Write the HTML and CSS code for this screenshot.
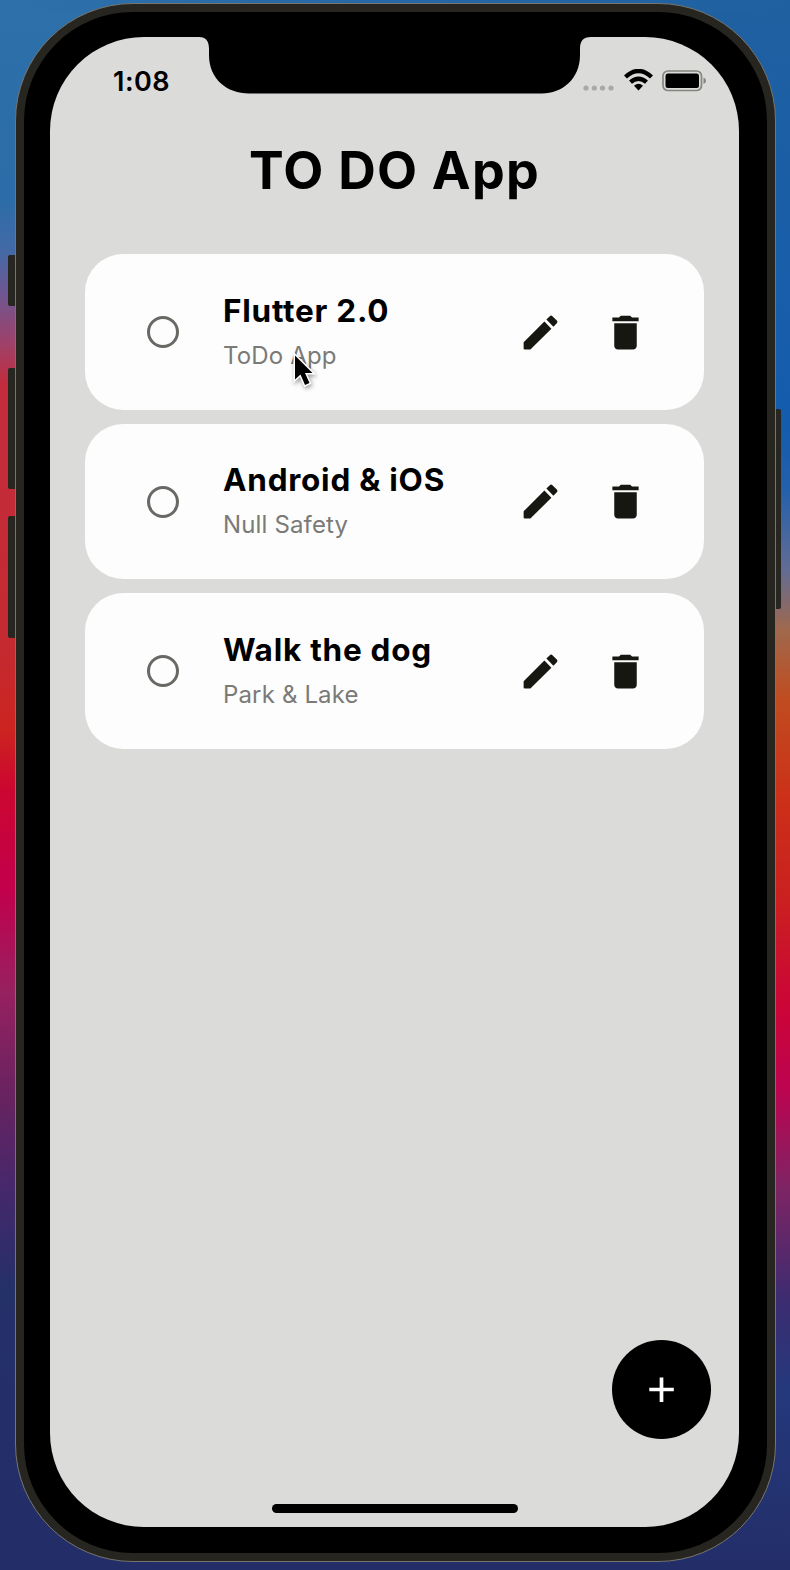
FILE: index.html
```html
<!DOCTYPE html>
<html lang="en">
<head>
<meta charset="utf-8">
<title>TO DO App</title>
<link rel="stylesheet" href="styles.css">
</head>
<body>
<svg class="defs" width="0" height="0" aria-hidden="true">
  <symbol id="edit" viewBox="0 0 24 24"><path d="M3 17.46v3.04c0 .28.22.5.5.5h3.04c.13 0 .26-.05.35-.15L17.81 9.94l-3.75-3.75L3.15 17.1c-.1.1-.15.22-.15.36zM20.71 7.04c.39-.39.39-1.02 0-1.41l-2.34-2.34c-.39-.39-1.02-.39-1.41 0l-1.83 1.83 3.75 3.75 1.83-1.83z"/></symbol>
  <symbol id="trash" viewBox="0 0 24 24"><path d="M6 19c0 1.1.9 2 2 2h8c1.1 0 2-.9 2-2V7H6v12zM19 4h-3.500l-1-1h-5l-1 1H5v2h14V4z"/></symbol>
</svg>
<div class="side-button mute"></div>
<div class="side-button volume-up"></div>
<div class="side-button volume-down"></div>
<div class="side-button power"></div>
<div class="phone">
  <div class="bezel">
    <main class="screen">
      <svg class="notch" viewBox="0 0 392 57" width="392" height="57"><path d="M0 0C7 0 10 4 10 12V18C10 42 28 56.500 50 56.500H343C363 56.500 381 42 381 18V12C381 4 384 0 392 0Z"/></svg>
      <header class="status">
        <span class="time">1:08</span>
        <span class="indicators">
          <svg class="signal" width="32" height="28" viewBox="0 0 32 28"><circle cx="3" cy="21" r="2.600"/><circle cx="11.300" cy="21" r="2.600"/><circle cx="19.500" cy="21" r="2.600"/><circle cx="28" cy="21" r="2.600"/></svg>
          <svg class="wifi" width="29" height="22" viewBox="0 0 29 22"><path class="arc" d="M1.500 8Q14.500-4 27.500 8"/><path class="arc" d="M6.500 13.200Q14.500 6.200 22.500 13.200"/><path d="M10 16.700Q14.500 12.600 19 16.700L14.500 21.500Z"/></svg>
          <svg class="battery" width="45" height="22" viewBox="0 0 45 22"><rect class="case" x="1" y="1" width="38.500" height="19.500" rx="5"/><rect x="3.500" y="3.500" width="33.500" height="14.500" rx="2.500"/><path class="cap" d="M41.500 7.500Q44 8.500 44 10.800T41.500 14Z"/></svg>
        </span>
      </header>
      <h1 class="title">TO DO App</h1>
      <ul class="list">
        <li class="card">
          <span class="check"></span>
          <div class="text"><h2 class="name">Flutter 2.0</h2><p class="note">ToDo App</p></div>
          <svg class="icon"><use href="#edit"/></svg>
          <svg class="icon"><use href="#trash"/></svg>
        </li>
        <li class="card">
          <span class="check"></span>
          <div class="text"><h2 class="name">Android &amp; iOS</h2><p class="note">Null Safety</p></div>
          <svg class="icon"><use href="#edit"/></svg>
          <svg class="icon"><use href="#trash"/></svg>
        </li>
        <li class="card">
          <span class="check"></span>
          <div class="text"><h2 class="name">Walk the dog</h2><p class="note">Park &amp; Lake</p></div>
          <svg class="icon"><use href="#edit"/></svg>
          <svg class="icon"><use href="#trash"/></svg>
        </li>
      </ul>
      <footer class="footer">
        <button class="add" aria-label="Add"><svg width="26" height="26" viewBox="0 0 26 26"><path d="M12.500 .5V25M.3 12.500H24.800"/></svg></button>
        <div class="home-bar"></div>
      </footer>
    </main>
  </div>
</div>
<svg class="cursor" width="30" height="40" viewBox="0 0 30 40"><path d="M3 3.500V27.500L8.500 22.500L13 33L17.500 31L13 21H20.500Z"/></svg>
</body>
</html>
```
FILE: styles.css
```css
* { box-sizing: border-box; }
body {
  margin: 0;
  width: 790px;
  height: 1570px;
  overflow: hidden;
  padding: 3px 14px 8px 15px;
  font-family: Inter, "Liberation Sans", sans-serif;
  background:
    linear-gradient(90deg, #2d70aa, #1f60a0) top / 100% 12px no-repeat,
    linear-gradient(#2d70aa 0, #2c6ca8 200px, #426aa5 250px, #6b5894 290px, #a04068 345px, #c22c3c 385px, #c42a30 650px, #cc2420 730px, #cc0630 790px, #c2004c 890px, #982060 990px, #662360 1100px, #45286c 1190px, #243068 1290px, #232e68 1570px) left / 150px 100% no-repeat,
    linear-gradient(#1f60a0 0, #145cae 430px, #2460ac 490px, #626c94 570px, #a0684c 630px, #c04c20 700px, #cc3018 800px, #ca2020 900px, #cb0438 1010px, #bc0450 1090px, #7c2464 1190px, #3c2c70 1300px, #24387c 1390px, #232e68 1570px) right / 640px 100% no-repeat;
}
.defs { position: absolute; }
.side-button { position: absolute; left: 8px; width: 9px; background: #282620; border-radius: 2px 0 0 2px; }
.mute { top: 255px; height: 51px; }
.volume-up { top: 368px; height: 121px; }
.volume-down { top: 516px; height: 122px; }
.power { left: 773px; top: 409px; height: 200px; width: 8px; border-radius: 0 2px 2px 0; }
.phone {
  position: relative;
  height: 1559px;
  padding: 8px;
  border: 1px solid #77756e;
  border-radius: 118px;
  background: #26251f;
}
.bezel { height: 100%; padding: 25px 28px 26px 26px; border-radius: 109px; background: #000; }
.screen {
  position: relative;
  height: 100%;
  display: flex;
  flex-direction: column;
  overflow: hidden;
  border-radius: 94px;
  background: #dbdbd9;
}
.notch { position: absolute; top: 0; left: 149px; }
.status { height: 90px; display: flex; justify-content: space-between; padding: 29px 32px 0 63px; }
.time { font-size: 27px; line-height: 32px; font-weight: 600; letter-spacing: .5px; }
.indicators { display: flex; gap: 9px; padding-top: 4px; }
.signal { fill: #a9a9a9; margin-top: -3px; }
.wifi { margin-top: -1px; }
.arc { fill: none; stroke: #000; stroke-width: 4.400; }
.case { fill: none; stroke: #85857f; stroke-width: 1.700; }
.cap { fill: #85857f; }
.title { margin: 12px 0 0; height: 64px; line-height: 64px; text-align: center; font-size: 52px; font-weight: 700; letter-spacing: 1.250px; }
.list { margin: 51px 0 0; padding: 0 35px; list-style: none; display: grid; gap: 14px; }
.card { height: 155.500px; padding: 1px 0 0 62px; border-radius: 38px; background: #fdfdfd; display: flex; align-items: center; }
.check { width: 32px; height: 32px; border: 3px solid #686864; border-radius: 50%; margin-right: 44px; flex: none; }
.text { width: 295px; padding-top: 2px; flex: none; }
.name { margin: 0; font-size: 31.500px; line-height: 42px; font-weight: 700; letter-spacing: .75px; }
.note { margin: 3px 0 0; font-size: 24px; line-height: 42px; color: #7a7a77; letter-spacing: .15px; }
.icon { width: 45px; height: 45px; fill: #171711; flex: none; }
.icon + .icon { margin-left: 40px; }
.footer { margin-top: auto; display: flex; flex-direction: column; }
.add { align-self: flex-end; margin: 0 28px 65px 0; width: 99px; height: 99px; border: 0; padding: 0; border-radius: 50%; background: #000; display: grid; place-items: center; }
.add path { fill: none; stroke: #fff; stroke-width: 3.700; }
.home-bar { align-self: center; width: 246px; height: 9px; margin-bottom: 14px; border-radius: 5px; background: #000; }
.cursor { position: absolute; left: 292px; top: 352px; filter: drop-shadow(1px 2px 2px rgba(0,0,0,.4)); }
.cursor path { stroke: #fff; stroke-width: 3; paint-order: stroke; }
```
